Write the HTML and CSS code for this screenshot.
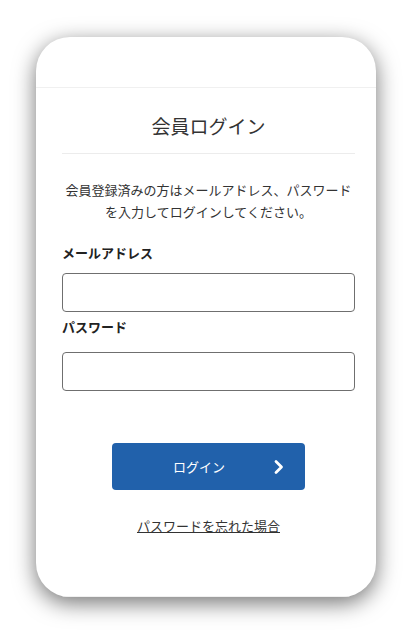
FILE: index.html
```html
<!DOCTYPE html>
<html lang="ja">
<head>
    <meta charset="UTF-8">
    <meta name="viewport" content="width=device-width, initial-scale=1.0">
    <title>会員ログイン</title>
    <link rel="stylesheet" href="styles.css">
</head>
<body>
    <div class="card">
        <div class="card-top"></div>
        <div class="login">
            <h1 class="login-title">会員ログイン</h1>
            <p class="login-lead">会員登録済みの方はメールアドレス、パスワード<br>を入力してログインしてください。</p>
            <form class="login-form" onsubmit="return false;">
                <label class="field-label" for="email">メールアドレス</label>
                <input class="field-input" id="email" type="email">
                <label class="field-label second" for="password">パスワード</label>
                <input class="field-input second" id="password" type="password">
                <button class="login-button" type="submit">
                    <span>ログイン</span>
                    <svg class="chevron" width="12" height="16" viewBox="0 0 12 16">
                        <path d="M3 2.5 L8.5 8 L3 13.5" fill="none" stroke="#fff" stroke-width="2.8" stroke-linecap="round" stroke-linejoin="round"/>
                    </svg>
                </button>
            </form>
            <a class="forgot" href="#">パスワードを忘れた場合</a>
        </div>
        <div class="card-bottom"></div>
    </div>
</body>
</html>
```

FILE: styles.css
```css
body {
    margin: 0;
    padding: 37px 35px 34px 36px;
    background-color: #fff;
    font-family: "Noto Sans CJK JP", "Noto Sans", sans-serif;
    color: #333;
}
.card {
    width: 340px;
    height: 560px;
    background: #fff;
    border-radius: 34px;
    box-shadow: 0 6px 22px rgba(0, 0, 0, 0.55);
    display: flex;
    flex-direction: column;
    overflow: hidden;
}
.card-top {
    height: 50px;
    border-bottom: 1px solid #f0f0f0;
}
.login {
    flex: 1;
    padding: 0 21px 0 26px;
    display: flex;
    flex-direction: column;
    align-items: center;
    border-bottom: 1px solid #f0f0f0;
}
.login-title {
    align-self: stretch;
    margin: 24px 0 0;
    padding-bottom: 13px;
    border-bottom: 1px solid #ececec;
    font-size: 19px;
    font-weight: normal;
    line-height: 28px;
    text-align: center;
}
.login-lead {
    margin: 25px 0 0;
    font-size: 13px;
    line-height: 22px;
    text-align: center;
}
.login-form {
    align-self: stretch;
    display: flex;
    flex-direction: column;
    align-items: stretch;
}
.field-label {
    margin-top: 20px;
    font-size: 13px;
    font-weight: bold;
    line-height: 20px;
    color: #222;
}
.field-label.second {
    margin-top: 5px;
}
.field-input {
    margin-top: 10px;
    height: 39px;
    box-sizing: border-box;
    border: 1px solid #6f6f6f;
    border-radius: 4px;
    background: #fff;
}
.field-input.second {
    margin-top: 15px;
}
.login-button {
    align-self: center;
    margin-top: 52px;
    width: 193px;
    height: 47px;
    border: none;
    border-radius: 4px;
    background-color: #2161ab;
    color: #fff;
    font-family: inherit;
    font-size: 13px;
    display: flex;
    align-items: center;
    padding: 0 20px 0 61px;
    box-sizing: border-box;
}
.login-button span {
    flex: 1;
    text-align: left;
}
.forgot {
    margin-top: 26px;
    font-size: 13px;
    line-height: 20px;
    color: #333;
    text-decoration: underline;
}
```
